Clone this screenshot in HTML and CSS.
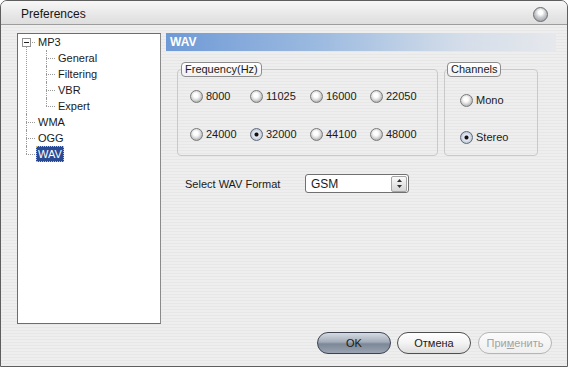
FILE: index.html
```html
<!DOCTYPE html>
<html lang="en">
<head>
    <meta charset="UTF-8">
    <title>Preferences</title>
    <link rel="stylesheet" href="styles.css">
</head>
<body>
    <div class="window">
        <div class="titlebar">
            <span class="title">Preferences</span>
            <span class="close"></span>
        </div>

        <div class="main">
            <div class="tree">
                <ul class="root">
                    <li class="first">
                        <span class="expander"></span>
                        <span class="node">MP3</span>
                        <ul class="sub">
                            <li><span class="node">General</span></li>
                            <li><span class="node">Filtering</span></li>
                            <li><span class="node">VBR</span></li>
                            <li class="last"><span class="node">Expert</span></li>
                        </ul>
                    </li>
                    <li><span class="node">WMA</span></li>
                    <li><span class="node">OGG</span></li>
                    <li class="last"><span class="node selected">WAV</span></li>
                </ul>
            </div>

            <div class="panel">
                <div class="header">WAV</div>

                <div class="groups">
                    <fieldset class="group freq">
                        <legend>Frequency(Hz)</legend>
                        <div class="freq-grid">
                            <label class="radio"><span class="dot"></span>8000</label>
                            <label class="radio"><span class="dot"></span>11025</label>
                            <label class="radio"><span class="dot"></span>16000</label>
                            <label class="radio"><span class="dot"></span>22050</label>
                            <label class="radio"><span class="dot"></span>24000</label>
                            <label class="radio"><span class="dot on"></span>32000</label>
                            <label class="radio"><span class="dot"></span>44100</label>
                            <label class="radio"><span class="dot"></span>48000</label>
                        </div>
                    </fieldset>

                    <fieldset class="group channels">
                        <legend>Channels</legend>
                        <div class="chan-list">
                            <label class="radio"><span class="dot"></span>Mono</label>
                            <label class="radio"><span class="dot on"></span>Stereo</label>
                        </div>
                    </fieldset>
                </div>

                <div class="format-row">
                    <span class="format-label">Select WAV Format</span>
                    <div class="combo">
                        <span>GSM</span>
                        <span class="spin">
                            <svg width="7" height="11" viewBox="0 0 7 11">
                                <path d="M3.5 1 L6 4 L1 4 Z" fill="#333"/>
                                <path d="M1 7 L6 7 L3.5 10 Z" fill="#333"/>
                            </svg>
                        </span>
                    </div>
                </div>
            </div>
        </div>

        <div class="buttons">
            <button class="btn ok">OK</button>
            <button class="btn">Отмена</button>
            <button class="btn disabled">При<u>м</u>енить</button>
        </div>
    </div>
</body>
</html>
```

FILE: styles.css
```css
body {
    margin: 0;
    background: #fff;
    font-family: "Liberation Sans", Arial, sans-serif;
    font-size: 11px;
    color: #1a1a1a;
}

.window {
    width: 566px;
    height: 365px;
    border: 1px solid #5e5e5e;
    border-radius: 7px 7px 0 0;
    background: repeating-linear-gradient(180deg, #eeeeee 0 2px, #e7e7e7 2px 3px);
    display: flex;
    flex-direction: column;
    overflow: hidden;
}

/* title */
.titlebar {
    height: 23px;
    border-bottom: 1px solid #9d9d9d;
    background: linear-gradient(180deg, #f7f7f7, #e7e7e7 60%, #dedede);
    display: flex;
    align-items: center;
    justify-content: space-between;
    padding: 0 19px 0 20px;
}
.title {
    font-size: 12px;
    color: #151515;
    margin-top: 2px;
}
.close {
    width: 13px;
    height: 13px;
    border-radius: 50%;
    border: 1px solid #6b6b6b;
    background: radial-gradient(circle at 50% 35%, #ffffff 0 2px, #c9ccd0 5px, #8d9196);
    margin-top: 3px;
}

/* body */
.main {
    display: flex;
    gap: 5px;
    padding: 8px 11px 0 16px;
}

.tree {
    width: 142px;
    height: 289px;
    border: 1px solid #6d6d6d;
    border-right-color: #8a8a8a;
    background: #fff;
}
.tree ul {
    list-style: none;
    margin: 0;
    padding: 0;
}
.tree li {
    position: relative;
    padding-left: 18px;
    line-height: 16px;
}
.tree li::before {
    content: "";
    position: absolute;
    left: 8px;
    top: 8px;
    width: 9px;
    border-top: 1px dotted #9a9a9a;
}
.tree li::after {
    content: "";
    position: absolute;
    left: 8px;
    top: 0;
    bottom: 0;
    border-left: 1px dotted #9a9a9a;
}
.tree li.first::after {
    top: 8px;
}
.tree li.last::after {
    bottom: auto;
    height: 8px;
}
.tree .sub {
    margin-left: 2px;
}
.tree .node {
    display: inline-block;
    padding: 0 2px;
    height: 16px;
}
.tree .selected {
    background: #2a4a94;
    color: #fff;
    outline: 1px dotted #d8c070;
    outline-offset: -1px;
}
.expander {
    position: absolute;
    left: 4px;
    top: 4px;
    width: 7px;
    height: 7px;
    border: 1px solid #939393;
    background: #fff;
    z-index: 1;
}
.expander::after {
    content: "";
    position: absolute;
    left: 1px;
    top: 3px;
    width: 5px;
    border-top: 1px solid #222;
}

/* right side */
.panel {
    flex: 1;
}
.header {
    height: 18px;
    line-height: 18px;
    padding-left: 4px;
    color: #fff;
    font-weight: bold;
    font-size: 12px;
    background: linear-gradient(90deg, #6f9ad6, #9dbbe0 40%, #d3dde9 75%, #e6e8ec);
}

.groups {
    display: flex;
    gap: 6px;
    margin-top: 11px;
    padding-left: 11px;
}
.group {
    margin: 0;
    padding: 0;
    border: 1px solid #c9c9c9;
    border-radius: 4px;
    min-width: 0;
}
.group legend {
    margin-left: 3px;
    padding: 0 3px;
    height: 13px;
    line-height: 13px;
    border: 1px solid #8c8c8c;
    border-radius: 4px;
    background: linear-gradient(180deg, #ffffff, #f1f1f1);
    color: #1a1a1a;
}
.freq {
    width: 259px;
}
.channels {
    width: 92px;
}
.channels legend {
    margin-left: 2px;
}

.freq-grid {
    display: grid;
    grid-template-columns: repeat(4, 60px);
    grid-auto-rows: 16px;
    row-gap: 22px;
    margin: 11px 0 13px 12px;
}
.chan-list {
    display: flex;
    flex-direction: column;
    gap: 21px;
    margin: 15px 0 0 15px;
}

.radio {
    display: flex;
    align-items: center;
    gap: 3px;
    height: 16px;
}
.dot {
    width: 11px;
    height: 11px;
    border-radius: 50%;
    border: 1px solid #7a7a7a;
    background: radial-gradient(circle at 45% 40%, #ffffff 0 2px, #e3e3e3 4px, #adadad 7px);
}
.dot.on {
    background: radial-gradient(circle at 50% 50%, #111 0 1.5px, #e9eef6 2.5px, #c6cfdc 5px, #8f9bb0 7px);
    border-color: #5f6a7c;
}

.format-row {
    display: flex;
    align-items: center;
    margin-top: 18px;
    padding-left: 19px;
}
.format-label {
    width: 120px;
}
.combo {
    width: 96px;
    height: 17px;
    border: 1px solid #707070;
    border-radius: 3px;
    background: #fff;
    display: flex;
    align-items: center;
    justify-content: space-between;
    padding: 0 1px 0 5px;
    font-size: 12px;
}
.spin {
    width: 14px;
    height: 14px;
    border: 1px solid #a5a5a5;
    border-radius: 2px;
    background: linear-gradient(180deg, #fafafa, #d6d6d6);
    display: flex;
    align-items: center;
    justify-content: center;
}

/* buttons */
.buttons {
    display: flex;
    justify-content: flex-end;
    gap: 6px;
    margin-top: 8px;
    padding-right: 15px;
}
.btn {
    width: 74px;
    height: 22px;
    border-radius: 11px;
    border: 1px solid #4e4e4e;
    background: linear-gradient(180deg, #ffffff, #f3f3f3 50%, #dcdcdc);
    font-family: "Liberation Sans", Arial, sans-serif;
    font-size: 11px;
    color: #1a1a1a;
    padding: 0;
}
.btn.ok {
    border-color: #3d4450;
    background: linear-gradient(180deg, #d5dbe3, #a3acb9 45%, #7c8797 55%, #9aa4b2);
}
.btn.disabled {
    margin-left: 1px;
    border-color: #b5b5b5;
    color: #a3a3a3;
    background: linear-gradient(180deg, #fbfbfb, #efefef);
}
.btn u {
    text-decoration-thickness: 1px;
}
```
